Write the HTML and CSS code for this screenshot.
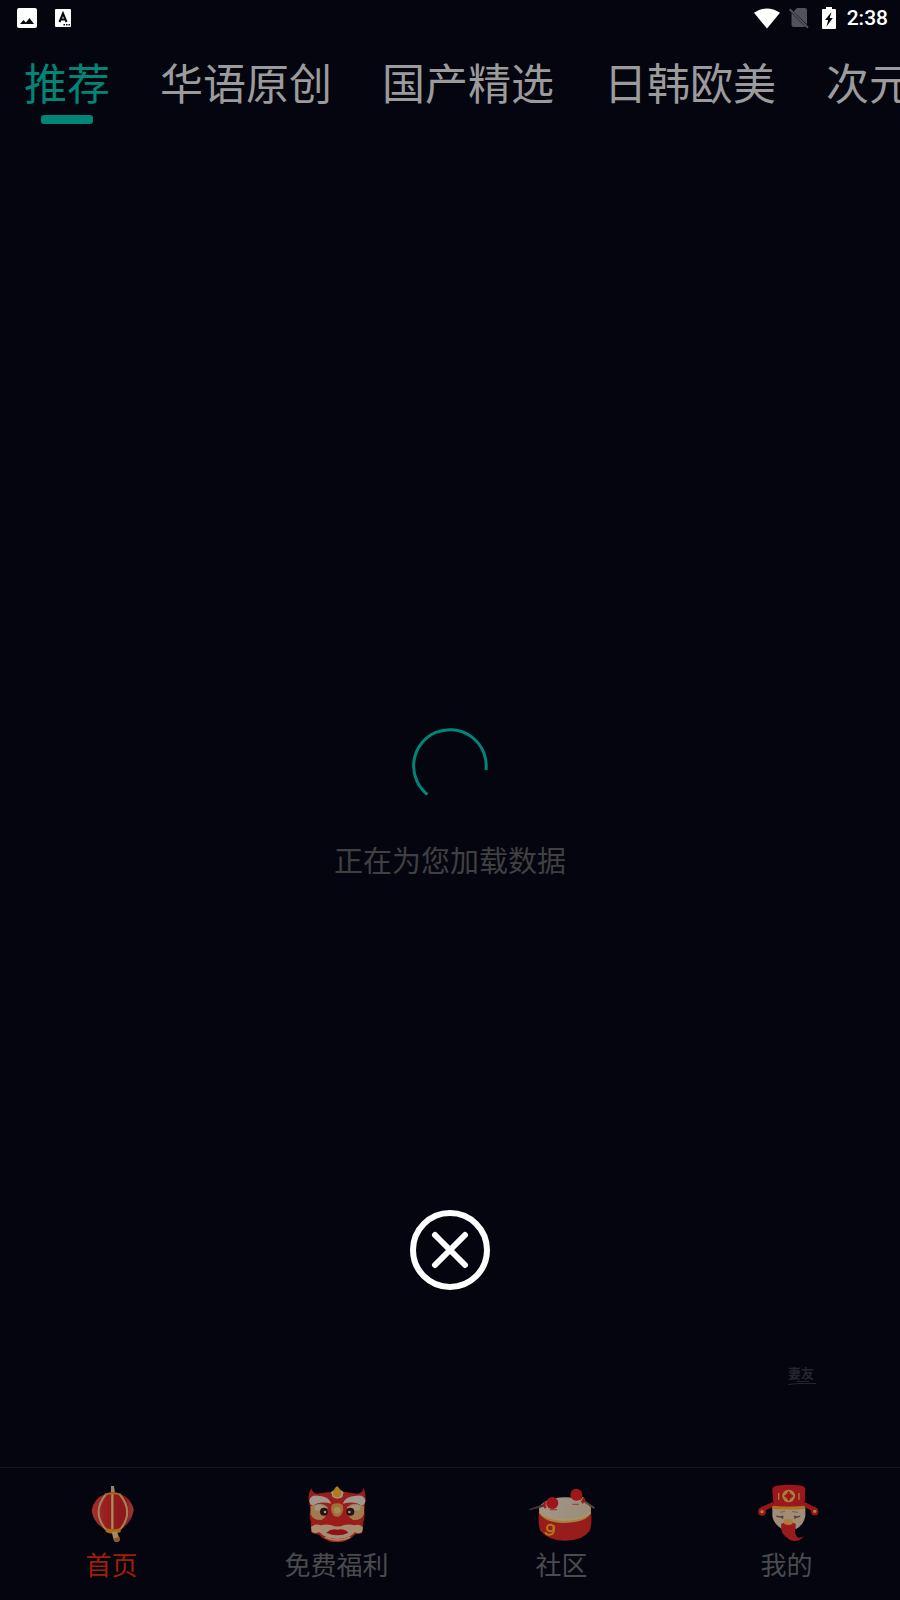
FILE: index.html
```html
<!DOCTYPE html>
<html lang="zh-CN">

<head>
  <meta charset="UTF-8">
  <meta name="viewport" content="width=device-width, initial-scale=1.0">
  <title>推荐</title>
  <link rel="stylesheet" href="styles.css">
</head>

<body>
  <header class="status-bar">
    <div class="status-left">
      <svg width="20" height="20" viewBox="0 0 20 20">
        <path fill="#fff" fill-rule="evenodd" d="M2 0h16a2 2 0 0 1 2 2v16a2 2 0 0 1-2 2H2a2 2 0 0 1-2-2V2a2 2 0 0 1 2-2zM3 16h14l-4.500-6-3.500 4.500L6.500 12z"/>
      </svg>
      <svg width="16" height="18" viewBox="0 0 16 18">
        <rect width="16" height="18" rx="1" fill="#fff"/>
        <path d="M4.500 13L8 4.500 11.500 13M5.500 10.500h5" fill="none" stroke="#050510" stroke-width="2"/>
        <path d="M8.500 15h1.500v1.500H8.500zM11 15h1.500v1.500H11zM13.500 15H15v1.500h-1.500z" fill="#050510"/>
      </svg>
    </div>
    <div class="status-right">
      <svg width="26" height="21" viewBox="0 0 27 21">
        <path fill="#fff" d="M0 4.500Q13.500-4.500 27 4.500L13.500 21z"/>
      </svg>
      <svg class="sim" width="20" height="22" viewBox="0 0 20 22">
        <path fill="#51525b" d="M8 1h8a2 2 0 0 1 2 2v14.500L4.500 4.500zM2.500 6L16.500 20H4.500a2 2 0 0 1-2-2z"/>
        <path d="M.7 2.200L19 20.700" stroke="#51525b" stroke-width="2"/>
      </svg>
      <svg class="battery" width="14" height="22" viewBox="0 0 14 22">
        <path fill="#fff" d="M4 0h6v2h3a1 1 0 0 1 1 1v18a1 1 0 0 1-1 1H1a1 1 0 0 1-1-1V3a1 1 0 0 1 1-1h3z"/>
        <path fill="#050510" d="M9.500 5L3 13h3.200L4.500 19.500l6.300-8.500H7.700z"/>
      </svg>
      <span class="time">2:38</span>
    </div>
  </header>

  <nav class="tabs">
    <a href="#" class="tab active">推荐</a>
    <a href="#" class="tab">华语原创</a>
    <a href="#" class="tab">国产精选</a>
    <a href="#" class="tab">日韩欧美</a>
    <a href="#" class="tab">次元</a>
  </nav>

  <main class="content">
    <div class="loading">
      <svg width="76" height="76" viewBox="0 0 76 76">
        <path d="M15.500 66.500A36.300 36.300 0 1 1 74 42" fill="none" stroke="#008577" stroke-width="3"/>
      </svg>
      <p>正在为您加载数据</p>
    </div>

    <button class="close-button" type="button" aria-label="关闭">
      <svg width="80" height="80" viewBox="0 0 80 80" fill="none" stroke="#fff">
        <circle cx="40" cy="40" r="37" stroke-width="6"/>
        <path d="M25 25l30 30M55 25L25 55" stroke-width="6" stroke-linecap="round"/>
      </svg>
    </button>

    <a href="#" class="float-logo">妻友
      <svg width="28" height="4" viewBox="0 0 28 4">
        <path d="M0 3.500L10 2.500h18M9 .500h12" fill="none" stroke="#24252d"/>
      </svg>
    </a>
  </main>

  <nav class="bottom-nav">
    <a href="#" class="nav-item active">
      <svg width="66" height="60" viewBox="58 72 198 180">
        <defs>
          <linearGradient id="lantern" x1="0" x2="1">
            <stop offset="0" stop-color="#a5302d"/>
            <stop offset=".4" stop-color="#971c1c"/>
            <stop offset=".8" stop-color="#8d171b"/>
            <stop offset="1" stop-color="#a03c38"/>
          </linearGradient>
        </defs>
        <path d="M154 78h9l3 22h-12z" fill="#9c8366"/>
        <path d="M138 101Q160 91 181 101Q216 115 222 150Q216 188 181 211H140Q102 190 96 152Q101 115 138 101z" fill="url(#lantern)"/>
        <path d="M140 102Q94 155 139 209M179 102Q225 155 181 209" fill="none" stroke="#a18357" stroke-width="6"/>
        <path d="M158 99v108" stroke="#aa8b5c" stroke-width="7"/>
        <path d="M136 101Q160 92 182 101L179 105Q159 100 139 105z" fill="#a66a18"/>
        <path d="M138 204q22 8 45 0v12q-23 10-45 0z" fill="#a96e12"/>
        <path d="M156 216l16-1 9 25q-7 10-18 3z" fill="#a2896c"/>
        <path d="M164 235l16-4 1 9q-7 9-18 3z" fill="#995018"/>
      </svg>
      <span>首页</span>
    </a>
    <a href="#" class="nav-item">
      <svg width="66" height="60" viewBox="103 72 198 180">
        <path d="M125 85q3 15 17 16l37-5h47l36 5q17-1 20-17 9 23 4 48l-2 20q3 16-3 35l-5 33q-17 1-21 5-20 21-54 21t-53-22q-17-2-22-7l-3-35q-6-16-1-32l-4-27q-5-19 7-38z" fill="#9a1c1c"/>
        <path d="M119 121q4-18 27-14 32 1 39 24-35-10-55 6-11-1-11-16zM287 121q-4-18-27-14-34 1-41 24 37-9 56 6 12-1 12-16z" fill="#a2978c"/>
        <path d="M123 139q30-17 51 2 1 31-19 39-26 1-32-18zM283 139q-30-17-51 2-1 31 19 39 26 1 32-18z" fill="#a27a50"/>
        <path d="M134 138q22-9 38 5l-5 10-31-2zM272 138q-22-9-38 5l5 10 31-2z" fill="#a4927b"/>
        <circle cx="163" cy="155" r="12" fill="#2a1010"/>
        <circle cx="242" cy="155" r="12" fill="#2a1010"/>
        <circle cx="166" cy="156" r="4" fill="#999"/>
        <circle cx="239" cy="156" r="4" fill="#999"/>
        <path d="M186 134q17-8 33 0l2 14q-4 23-18 22-16 1-19-22z" fill="#9d7038"/>
        <circle cx="203" cy="151" r="10" fill="#a88a58"/>
        <path d="M184 96q20-17 38 0l-4 15q-15 9-29 0z" fill="#a59886"/>
        <path d="M202 78q15 13 13 24-4 11-13 10-12-1-12-11 0-12 12-23z" fill="#b07c17"/>
        <path d="M124 201q11-12 29-5 18-4 31-1 20 9 39 0 17-4 31 1 18-6 26 6l-2 14q-11 8-22 1-25 26-52 25-32 0-54-25-15 5-24-1z" fill="#aa8b6b"/>
        <path d="M149 203q32-3 54 2 23-6 53-2-15 33-53 33t-54-33z" fill="#a08c77"/>
        <path d="M170 218q15-13 33-9 20-4 33 9-32 15-66 0z" fill="#930f16"/>
        <path d="M158 226q44 22 91-1-15 22-45 22t-46-21z" fill="#a42520"/>
        <path d="M166 232q37 17 76 0" stroke="#a98a68" stroke-width="5" fill="none"/>
      </svg>
      <span>免费福利</span>
    </a>
    <a href="#" class="nav-item">
      <svg width="66" height="60" viewBox="58 72 198 180">
        <defs>
          <linearGradient id="drum" x1="0" x2="1">
            <stop offset="0" stop-color="#a3948a"/>
            <stop offset="1" stop-color="#9b8d78"/>
          </linearGradient>
        </defs>
        <path d="M88 152q-4 40 4 60 24 30 76 30 51-1 72-29 8-22 4-59z" fill="#991c1d"/>
        <path d="M88 143v16q16 28 72 30 67 0 84-29v-20z" fill="#a5813d"/>
        <ellipse cx="166" cy="147" rx="77" ry="35" fill="url(#drum)"/>
        <path d="M90 155q20 22 67 24 65 1 84-23" fill="none" stroke="#ab936a" stroke-width="6"/>
        <path d="M58 147l47-16 3 8-48 12z" fill="#4c3027"/>
        <path d="M223 119l34 24-5 3-34-22z" fill="#614035"/>
        <path d="M103 124l9 2v16l-7 4q-7-12-2-22zM214 125l7-15 6 8-7 14z" fill="#9e1719"/>
        <path d="M110 125v17" stroke="#a77a31" stroke-width="4"/>
        <path d="M212 124l8-13" stroke="#a77a31" stroke-width="4"/>
        <circle cx="128" cy="129" r="18" fill="#9e1519"/>
        <circle cx="200" cy="104" r="18" fill="#a0171b"/>
        <path d="M120 149h22M188 133h20" stroke="#9c4540" stroke-width="4"/>
        <circle cx="122" cy="204" r="10" fill="none" stroke="#b57516" stroke-width="6"/>
        <path d="M132 196q6 28-14 28-9 0-11-8" fill="none" stroke="#b57516" stroke-width="6"/>
      </svg>
      <span>社区</span>
    </a>
    <a href="#" class="nav-item">
      <svg width="66" height="60" viewBox="43 72 198 180">
        <path d="M98 139h99v28q-4 26-26 39h-46q-24-16-27-38z" fill="#a08c77"/>
        <path d="M102 132L61 151M192 132l38 20" stroke="#971619" stroke-width="14"/>
        <circle cx="67" cy="155" r="12" fill="#971619"/>
        <circle cx="225" cy="155" r="11" fill="#971619"/>
        <circle cx="67" cy="155" r="5" fill="#a8803c"/>
        <circle cx="225" cy="154" r="5" fill="#a8803c"/>
        <path d="M98 90q-1-10 12-13 37-5 75 0 13 2 12 13l-3 50h-92z" fill="#9c171b"/>
        <path d="M99 137q48 6 96 0l1 9q-49 5-98 0z" fill="#a67721"/>
        <circle cx="147" cy="108" r="19" fill="#a5833f"/>
        <path d="M147 94q4 10 13 14-9 5-13 14-4-9-13-14 9-4 13-14z" fill="#9c171b" stroke="#9c171b" stroke-width="3"/>
        <path d="M117 99v20M178 99v20" stroke="#a68039" stroke-width="4"/>
        <path d="M121 157l15-3M157 154l17 3" stroke="#806a56" stroke-width="4"/>
        <path d="M110 168q12 5 21 0M163 168q8 6 18 0M131 175l-7-4M164 175l7-4" fill="none" stroke="#4d382f" stroke-width="4"/>
        <path d="M125 191q21-10 43 0 1 8-2 22 0 14 10 20 9 1 17-4-10 14-30 14-15-2-22-11-20-11-16-41z" fill="#9a1b1d"/>
        <ellipse cx="146" cy="186" rx="14" ry="9" fill="#b07b3b"/>
      </svg>
      <span>我的</span>
    </a>
  </nav>
</body>

</html>
```
FILE: styles.css
```css
* {
  box-sizing: border-box;
}

body {
  font-family: "Noto Sans CJK SC", sans-serif;
  background-color: #050510;
  color: #9b9b9b;
  margin: 0;
  min-height: 100vh;
  display: flex;
  flex-direction: column;
}

a {
  color: inherit;
  text-decoration: none;
}

svg {
  display: block;
}

.status-bar {
  display: flex;
  justify-content: space-between;
  height: 36px;
  padding: 0 12px 0 17px;
}

.status-left,
.status-right {
  display: flex;
  align-items: center;
}

.status-left {
  gap: 18px;
}

.sim {
  margin-left: 9px;
}

.battery {
  margin: 0 11px 0 13px;
}

.time {
  font-family: Roboto, sans-serif;
  font-size: 21px;
  font-weight: 500;
  line-height: 36px;
  color: #ffffff;
}

.tabs {
  display: flex;
  gap: 50px;
  height: 92px;
  padding: 14px 24px 0;
  overflow-x: auto;
  scrollbar-width: none;
}

.tab {
  flex-shrink: 0;
  font-size: 43px;
  line-height: 63px;
}

.tab.active {
  color: #008577;
}

.tab.active::after {
  content: "";
  display: block;
  width: 52px;
  height: 9px;
  margin: 2px auto 0;
  border-radius: 3px;
  background-color: #008577;
}

.content {
  flex: 1;
  position: relative;
  display: flex;
  align-items: center;
  justify-content: center;
}

.loading {
  display: flex;
  flex-direction: column;
  align-items: center;
  gap: 35px;
  padding-top: 11px;
  color: #404040;
  font-size: 29px;
  line-height: 40px;
}

.loading p {
  margin: 0;
}

.close-button {
  position: absolute;
  bottom: 177px;
  left: 50%;
  margin-left: -40px;
  padding: 0;
  border: none;
  background: none;
  cursor: pointer;
}

.float-logo {
  position: absolute;
  right: 84px;
  bottom: 82px;
  color: #24252d;
  font-size: 13px;
  font-weight: bold;
  line-height: 17px;
}

.bottom-nav {
  display: flex;
  padding: 16px 0 18px;
  border-top: 1px solid #15161d;
}

.nav-item {
  flex: 1;
  display: flex;
  flex-direction: column;
  align-items: center;
  gap: 2px;
  padding-right: 2px;
  font-size: 26px;
  line-height: 36px;
  color: #4b4b4e;
}

.nav-item.active {
  color: #9f1f08;
}
```
